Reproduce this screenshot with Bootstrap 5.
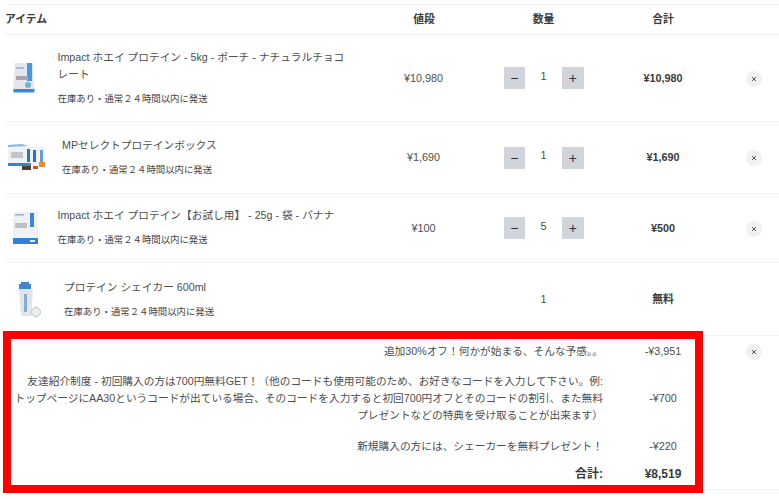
<!DOCTYPE html>
<html lang="ja">
<head>
<meta charset="utf-8">
<title>カート</title>
<link rel="stylesheet" href="https://cdn.jsdelivr.net/npm/bootstrap@5.3.0/dist/css/bootstrap.min.css">
<style>
html,body{margin:0;background:#fff;overflow:hidden}
body{font-family:"Liberation Sans","Noto Sans CJK JP",sans-serif;font-size:10.8px;color:#4d4d4d}
.cart-wrap{position:relative;width:779px;height:499px;padding:4px 0 0 4px}
.cart-table{table-layout:fixed;width:775px;margin:0;--bs-table-color:#4d4d4d;--bs-table-bg:transparent;--bs-table-border-color:#f3f3f3;border-top:1px solid #f3f3f3}
.cart-table td,.cart-table th{padding:0;vertical-align:middle;font-size:10.8px;text-align:center;line-height:17px}
.cart-table th{font-weight:700;font-size:10.8px;color:#3c3c3c;height:30px}
.cart-table th.head-item{text-align:left;padding-left:1px}
.r1{height:87px}.r2{height:72px}.r3{height:69px}.r4{height:73px}
.item-cell{display:flex;align-items:center;text-align:left}
.thumb{flex:none;display:flex;justify-content:center}
.thumb svg{filter:blur(.7px)}
.thumb-a{width:53.500px;padding-right:13px}
.thumb-b{width:58px;padding-right:12px}
.thumb-c{width:53.500px;padding-right:11px}
.thumb-d{width:60px;padding-right:8px}
.item-name{margin:0 0 7px;font-size:10.7px;line-height:17px;width:292px}
.item-stock{margin:0;font-size:9.4px;line-height:17px;color:#444}
.item-tight{margin-top:-2px}
.qty-box{display:flex;justify-content:center;align-items:center;gap:0}
.qty-btn{width:21.5px;height:22px;padding:0;border:0;border-radius:0;background:#d0d5dc;color:#333;font-size:14px;line-height:22px;display:flex;align-items:center;justify-content:center}
.qty-num{width:37px;font-size:10.8px;margin-top:-4px}
.price-strong{font-weight:700;color:#3a3a3a}
.price-col{padding-right:1px!important}
.rm-dot{width:16px;height:16px;border-radius:50%;background:#f1f1f1;display:inline-flex;align-items:center;justify-content:center;margin-left:5px}
.cart-table td.sum-label{text-align:right;padding-left:4px;font-size:10.7px}
.cart-table .sum-cell{border-bottom:0}
.cart-table .sum-push{padding-top:2px}
.s1{height:31px}.s2{height:62px}.s3{height:34px}.s4{height:27px}
.cart-table td.sum-total{font-weight:700;font-size:12px;color:#3a3a3a;padding-bottom:2px}
.cart-table tr.sum-end td{border-bottom:1px solid #f3f3f3}
.mark-box{position:absolute;left:3px;top:331px;width:700px;height:162px;border:8px solid #f00;pointer-events:none}
</style>
</head>
<body>
<div class="cart-wrap">
<table class="table cart-table">
<colgroup><col style="width:360px"><col style="width:120px"><col style="width:119px"><col style="width:120px"><col style="width:56px"></colgroup>
<thead>
<tr><th class="head-item">アイテム</th><th>値段</th><th>数量</th><th>合計</th><th></th></tr>
</thead>
<tbody>
<tr class="r1">
<td><div class="item-cell"><div class="thumb thumb-a"><svg width="24" height="33" viewBox="0 0 24 33"><path d="M3 1h18l1 29H1z" fill="#e4e6e9"/><rect x="15" y="1" width="5" height="18" fill="#4b97dc"/><rect x="4" y="5" width="8" height="2" fill="#9dc0e2"/><rect x="4" y="14" width="12" height="4" fill="#a5a8ad"/><path d="M1.500 27h21v3.500h-21z" fill="#3b88d4"/><circle cx="16" cy="23" r="3" fill="#6ab0e8"/></svg></div>
<div><p class="item-name">Impact ホエイ プロテイン - 5kg - ポーチ - ナチュラルチョコレート</p><p class="item-stock">在庫あり・通常２４時間以内に発送</p></div></div></td>
<td class="price-col">¥10,980</td>
<td><div class="qty-box"><button class="btn qty-btn" type="button">−</button><span class="qty-num">1</span><button class="btn qty-btn" type="button">+</button></div></td>
<td class="price-strong">¥10,980</td>
<td><span class="rm-dot"><svg width="6" height="6" viewBox="0 0 6 6"><path d="M1 1l4 4M5 1L1 5" stroke="#555" stroke-width="1"/></svg></span></td>
</tr>
<tr class="r2">
<td><div class="item-cell"><div class="thumb thumb-b"><svg width="40" height="32" viewBox="0 0 40 32"><path d="M1 3l14-1 6 2 17 1v18H1z" fill="#f0f3f6"/><path d="M1 3l14-1 6 2-20 1z" fill="#8ab8e4"/><rect x="20" y="7" width="3" height="13" fill="#2f72b8"/><rect x="26" y="8" width="3" height="12" fill="#2f72b8"/><rect x="33" y="8" width="3" height="12" fill="#6a9ace"/><rect x="4" y="10" width="12" height="6" fill="#c2c6cc"/><path d="M1 21h23v3H1z" fill="#3b82cc"/><rect x="15" y="24" width="9" height="4" fill="#5a3a2a"/><rect x="32" y="20" width="6" height="5" fill="#e98a35"/><rect x="26" y="24" width="5" height="3" fill="#c0562a"/></svg></div>
<div><p class="item-name">MPセレクトプロテインボックス</p><p class="item-stock">在庫あり・通常２４時間以内に発送</p></div></div></td>
<td class="price-col">¥1,690</td>
<td><div class="qty-box"><button class="btn qty-btn" type="button">−</button><span class="qty-num">1</span><button class="btn qty-btn" type="button">+</button></div></td>
<td class="price-strong">¥1,690</td>
<td><span class="rm-dot"><svg width="6" height="6" viewBox="0 0 6 6"><path d="M1 1l4 4M5 1L1 5" stroke="#555" stroke-width="1"/></svg></span></td>
</tr>
<tr class="r3">
<td><div class="item-cell"><div class="thumb thumb-c"><svg width="27" height="34" viewBox="0 0 27 34"><rect x="1" y="1" width="25" height="32" fill="#eff1f3"/><rect x="18" y="2" width="4" height="14" fill="#3a88de"/><rect x="3" y="3" width="9" height="1.500" fill="#8ab0dc"/><rect x="3" y="12" width="12" height="5" fill="#bcc0c5"/><rect x="1" y="27" width="25" height="6" fill="#3380da"/><rect x="18" y="29" width="5" height="2" fill="#e4edf9"/></svg></div>
<div class="item-tight"><p class="item-name">Impact ホエイ プロテイン【お試し用】 - 25g - 袋 - バナナ</p><p class="item-stock">在庫あり・通常２４時間以内に発送</p></div></div></td>
<td class="price-col">¥100</td>
<td><div class="qty-box"><button class="btn qty-btn" type="button">−</button><span class="qty-num">5</span><button class="btn qty-btn" type="button">+</button></div></td>
<td class="price-strong">¥500</td>
<td><span class="rm-dot"><svg width="6" height="6" viewBox="0 0 6 6"><path d="M1 1l4 4M5 1L1 5" stroke="#555" stroke-width="1"/></svg></span></td>
</tr>
<tr class="r4">
<td><div class="item-cell"><div class="thumb thumb-d"><svg width="26" height="38" viewBox="0 0 26 38"><path d="M4 2h8v2h2v5H2V4h2z" fill="#3f84cc"/><path d="M2 9h14l-1.500 27H4z" fill="#e0e5ea"/><rect x="7" y="14" width="3" height="18" fill="#86abd3"/><circle cx="19" cy="32" r="4.500" fill="#eceef0" stroke="#bcc0c5" stroke-width="1"/></svg></div>
<div><p class="item-name">プロテイン シェイカー 600ml</p><p class="item-stock">在庫あり・通常２４時間以内に発送</p></div></div></td>
<td></td>
<td>1</td>
<td class="price-strong">無料</td>
<td></td>
</tr>
<tr class="s1 sum-row">
<td colspan="3" class="sum-label sum-cell">追加30%オフ！何かが始まる、そんな予感。。</td>
<td class="sum-cell">-¥3,951</td>
<td class="sum-cell"><span class="rm-dot"><svg width="6" height="6" viewBox="0 0 6 6"><path d="M1 1l4 4M5 1L1 5" stroke="#555" stroke-width="1"/></svg></span></td>
</tr>
<tr class="s2">
<td colspan="3" class="sum-label sum-cell sum-push">友達紹介制度 - 初回購入の方は700円無料GET！（他のコードも使用可能のため、お好きなコードを入力して下さい。例:<br>トップページにAA30というコードが出ている場合、そのコードを入力すると初回700円オフとそのコードの割引、また無料<br>プレゼントなどの特典を受け取ることが出来ます）</td>
<td class="sum-cell sum-push">-¥700</td>
<td class="sum-cell"></td>
</tr>
<tr class="s3">
<td colspan="3" class="sum-label sum-cell sum-push">新規購入の方には、シェーカーを無料プレゼント！</td>
<td class="sum-cell sum-push">-¥220</td>
<td class="sum-cell"></td>
</tr>
<tr class="s4 sum-end">
<td colspan="3" class="sum-label sum-total">合計:</td>
<td class="sum-total">¥8,519</td>
<td></td>
</tr>
</tbody>
</table>
<div class="mark-box"></div>
</div>
</body>
</html>
